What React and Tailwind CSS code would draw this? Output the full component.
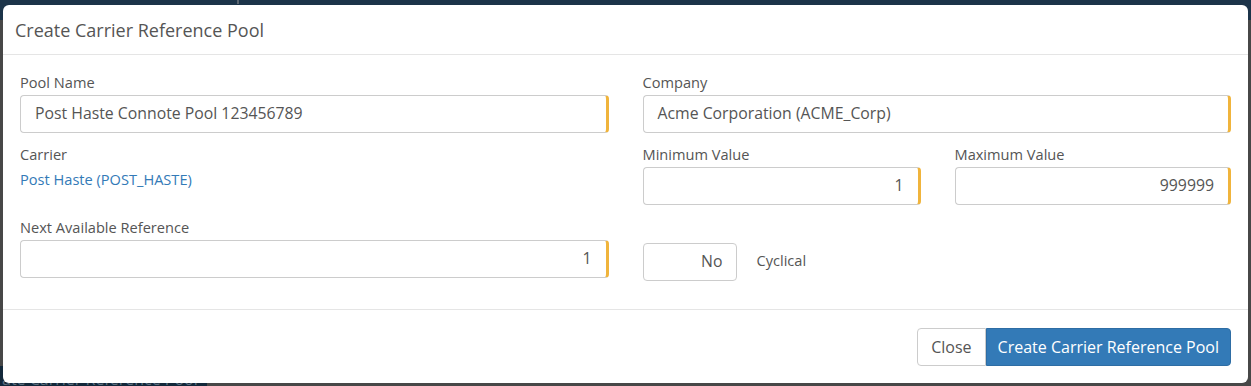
import React from 'react';

const font = { fontFamily: '"Open Sans", "Noto Sans", sans-serif' };

const Field = ({ label, value, align = 'left', className = '' }) => (
    <div className={className}>
        <label className="block text-[14.6px] leading-[20px] text-[#555] mb-[3px]">{label}</label>
        <div
            className={`h-[38px] rounded-[4px] border border-[#ccc] border-r-[3px] border-r-[#f0b43c] bg-white flex items-center px-[14px] text-[15.8px] text-[#555] ${align === 'right' ? 'justify-end' : ''}`}
        >
            {value}
        </div>
    </div>
);

export default function App() {
    return (
        <div className="relative w-[1251px] h-[386px] overflow-hidden bg-[#474747]" style={font}>
            {/* page behind the overlay */}
            <div className="absolute inset-x-0 top-0 h-[20px] bg-[#1c3449]">
                <div className="absolute left-[237px] top-0 w-[2px] h-[4px] bg-[#5a6570]" />
            </div>
            <div className="absolute left-0 bottom-0 w-[207px] h-[20px] bg-[#13283a] text-[#5d6f80] text-[16px] leading-[20px] pl-[2px] pt-[3px] whitespace-nowrap overflow-hidden">
                ate Carrier Reference Pool
            </div>

            {/* modal */}
            <div className="absolute left-[3px] top-[5px] w-[1245px] h-[378px] bg-white rounded-[6px] flex flex-col">
                <div className="h-[50px] border-b border-[#e5e5e5] flex items-center px-[12px]">
                    <h4 className="text-[18px] text-[#555] leading-none">Create Carrier Reference Pool</h4>
                </div>

                <div className="flex-1 px-[17px] pt-[17px] border-b border-[#e5e5e5]">
                    <div className="grid grid-cols-2 gap-x-[34px]">
                        <div className="flex flex-col">
                            <Field label="Pool Name" value="Post Haste Connote Pool 123456789" />
                            <div className="mt-[11px] h-[62px]">
                                <div className="text-[14.6px] leading-[20px] text-[#555]">Carrier</div>
                                <a className="block mt-[5px] text-[14.6px] leading-[20px] text-[#337ab7]">Post Haste (POST_HASTE)</a>
                            </div>
                            <Field label="Next Available Reference" value="1" align="right" className="mt-[11px]" />
                        </div>
                        <div className="flex flex-col">
                            <Field label="Company" value="Acme Corporation (ACME_Corp)" />
                            <div className="mt-[11px] grid grid-cols-[278px_1fr] gap-x-[34px]">
                                <Field label="Minimum Value" value="1" align="right" />
                                <Field label="Maximum Value" value="999999" align="right" />
                            </div>
                            <div className="mt-[38px] flex items-center">
                                <div className="w-[94px] h-[38px] rounded-[4px] border border-[#ccc] flex items-center justify-end pr-[13px] text-[15.8px] text-[#555]">
                                    No
                                </div>
                                <span className="ml-[20px] text-[14.6px] text-[#555] -mt-[3px]">Cyclical</span>
                            </div>
                        </div>
                    </div>
                </div>

                <div className="h-[73px] flex items-center justify-end px-[17px]">
                    <button className="h-[38px] px-[13px] text-[16px] text-[#555] bg-white border border-[#ccc] rounded-l-[4px]">
                        Close
                    </button>
                    <button className="h-[38px] px-[11px] text-[16px] text-white bg-[#337ab7] border border-[#2e6da4] rounded-r-[4px]">
                        Create Carrier Reference Pool
                    </button>
                </div>
            </div>
        </div>
    );
}
